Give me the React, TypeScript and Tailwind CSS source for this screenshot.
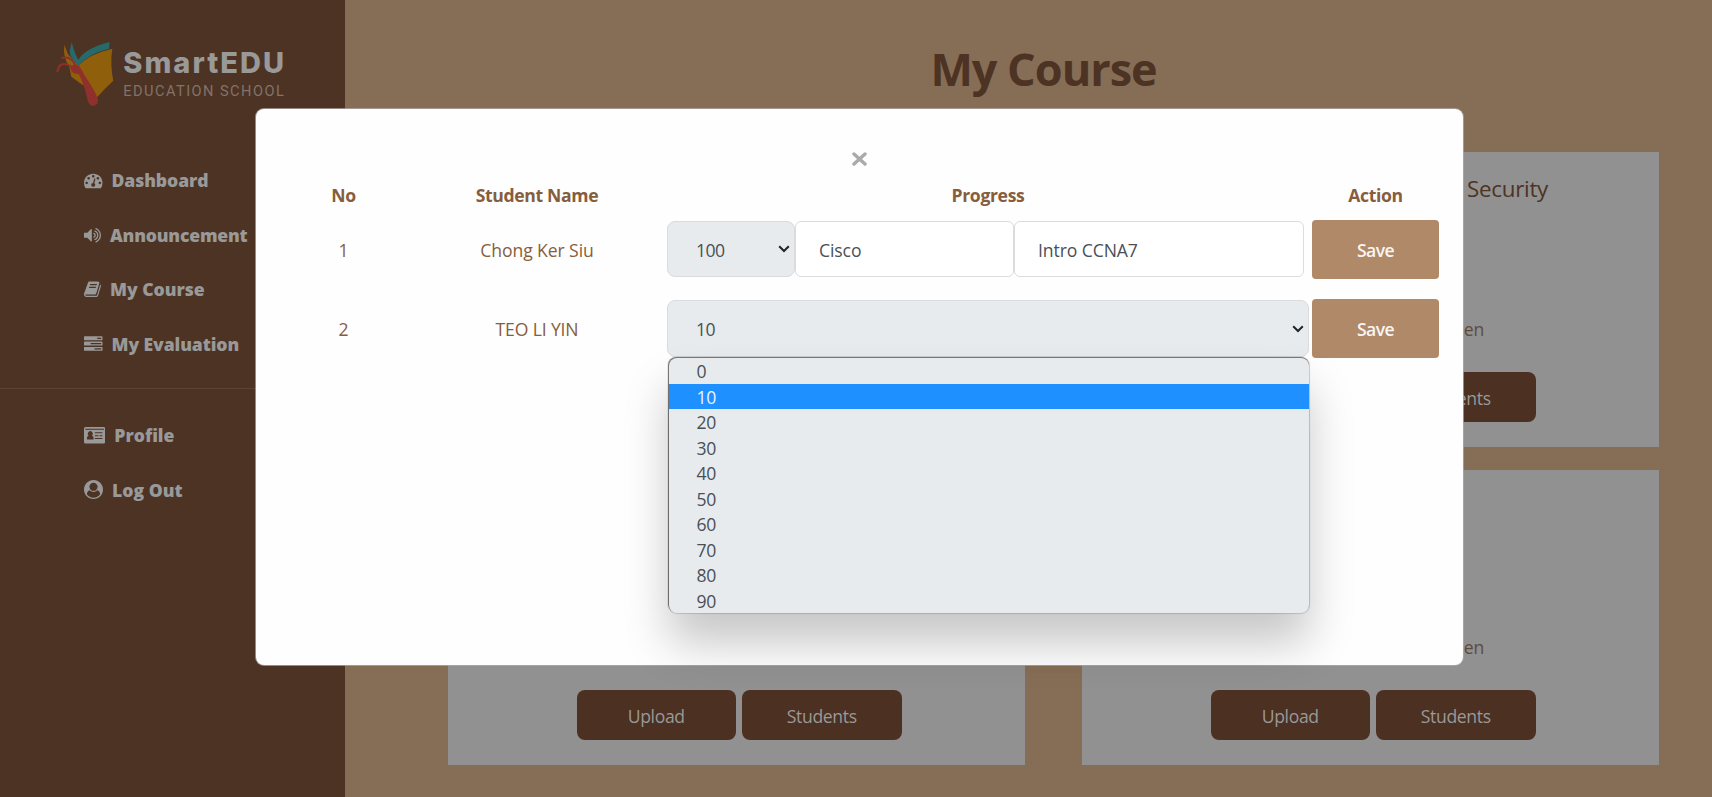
import React from "react";

const ICONS = {
  dashboard: {
    box: "0 0 1792 1792",
    cls: "h-[18.5px] w-[18.5px]",
    d: "M384 1152q0-53-37.5-90.5t-90.5-37.5-90.5 37.5-37.5 90.5 37.5 90.5 90.5 37.5 90.5-37.5 37.5-90.5zm192-448q0-53-37.5-90.5t-90.5-37.5-90.5 37.5-37.5 90.5 37.5 90.5 90.5 37.5 90.5-37.5 37.5-90.5zm428 481l101-382q6-26-7.5-48.5t-38.5-29.5-48 6.5-30 39.5l-101 382q-60 5-107 43.5t-63 98.5q-20 77 20 146t117 89 146-20 89-117q16-60-6-117t-72-91zm660-33q0-53-37.5-90.5t-90.5-37.5-90.5 37.5-37.5 90.5 37.5 90.5 90.5 37.5 90.5-37.5 37.5-90.5zm-640-640q0-53-37.5-90.5t-90.5-37.5-90.5 37.5-37.5 90.5 37.5 90.5 90.5 37.5 90.5-37.5 37.5-90.5zm448 192q0-53-37.5-90.5t-90.5-37.5-90.5 37.5-37.5 90.5 37.5 90.5 90.5 37.5 90.5-37.5 37.5-90.5zm320 448q0 261-141 483-19 29-54 29h-1402q-35 0-54-29-141-221-141-483 0-182 71-348t191-286 286-191 348-71 348 71 286 191 191 286 71 348z",
  },
  volume: {
    box: "64 0 1664 1792",
    cls: "h-[18.5px] w-[17px]",
    d: "M832 352v1088q0 26-19 45t-45 19-45-19l-333-333h-262q-26 0-45-19t-19-45v-384q0-26 19-45t45-19h262l333-333q19-19 45-19t45 19 19 45zm384 544q0 76-42.5 141.5t-112.5 93.5q-10 5-25 5-26 0-45-18.5t-19-45.5q0-21 12-35.5t29-25 34-23 29-36 12-56.5-12-56.5-29-36-34-23-29-25-12-35.5q0-27 19-45.5t45-18.5q15 0 25 5 70 27 112.5 93t42.5 142zm256 0q0 153-85 282.5t-225 188.5q-13 5-25 5-27 0-46-19t-19-45q0-39 39-59 56-29 76-44 74-54 115.5-135.5t41.5-173.5-41.5-173.5-115.5-135.5q-20-15-76-44-39-20-39-59 0-26 19-45t45-19q13 0 26 5 140 59 225 188.5t85 282.5zm256 0q0 230-127 422.5t-338 283.5q-13 5-26 5-26 0-45-19t-19-45q0-36 39-59 7-4 22.5-10.5t22.5-10.5q46-25 82-51 123-91 192-227t69-289-69-289-192-227q-36-26-82-51-7-4-22.5-10.5t-22.5-10.5q-39-23-39-59 0-26 19-45t45-19q13 0 26 5 211 91 338 283.5t127 422.5z",
  },
  book: {
    box: "64 0 1664 1792",
    cls: "h-[18.5px] w-[17px]",
    d: "M1703 478q40 57 18 129l-275 906q-19 64-76.5 107.5t-122.5 43.5h-923q-77 0-148.5-53.5t-99.5-131.5q-24-67-2-127 0-4 3-27t4-37q1-8-3-21.5t-3-19.5q2-11 8-21t16.5-23.5 16.5-23.5q23-38 45-91.5t30-91.5q3-10 .5-30t-.5-28q3-11 17-28t17-23q21-36 42-92t25-90q1-9-2.5-32t.5-28q4-13 22-30.5t22-22.5q19-26 42.5-84.5t27.5-96.5q1-8-3-25.5t-2-26.5q2-8 9-18t18-23 17-21q8-12 16.5-30.5t15-35 16-36 19.5-32 26.5-23.5 36-11.5 47.5 5.5l-1 3q38-9 51-9h761q74 0 114 56t18 130l-274 906q-36 119-71.5 153.5t-128.5 34.5h-869q-27 0-38 15-11 16-1 43 24 70 144 70h923q29 0 56-15.5t35-41.5l300-987q7-22 5-57 38 15 59 43zm-1064 2q-4 13 2 22.5t20 9.5h608q13 0 25.5-9.5t16.5-22.5l21-64q4-13-2-22.5t-20-9.5h-608q-13 0-25.5 9.5t-16.5 22.5zm-83 256q-4 13 2 22.5t20 9.5h608q13 0 25.5-9.5t16.5-22.5l21-64q4-13-2-22.5t-20-9.5h-608q-13 0-25.5 9.5t-16.5 22.5z",
  },
  tasks: {
    box: "0 0 1792 1792",
    cls: "h-[18.5px] w-[18.5px]",
    d: "M1024 1408h640v-128h-640v128zm-384-512h1024v-128h-1024v128zm640-512h384v-128h-384v128zm512 832v256q0 26-19 45t-45 19h-1664q-26 0-45-19t-19-45v-256q0-26 19-45t45-19h1664q26 0 45 19t19 45zm0-512v256q0 26-19 45t-45 19h-1664q-26 0-45-19t-19-45v-256q0-26 19-45t45-19h1664q26 0 45 19t19 45zm0-512v256q0 26-19 45t-45 19h-1664q-26 0-45-19t-19-45v-256q0-26 19-45t45-19h1664q26 0 45 19t19 45z",
  },
  card: {
    box: "0 0 22 17",
    cls: "h-[16.5px] w-[21.3px]",
    d: "M1.6 0H20.4A1.6 1.6 0 0 1 22 1.6V15.4A1.6 1.6 0 0 1 20.4 17H1.6A1.6 1.6 0 0 1 0 15.4V1.6A1.6 1.6 0 0 1 1.6 0ZM1.4 1.8V2.7H20.6V1.8ZM3.6 13H9.4Q10 13 10 12.2Q10 9.2 8.2 9A2.5 2.7 0 1 0 4.8 9Q3 9.2 3 12.2Q3 13 3.6 13ZM11.2 5.4V6.5H19V5.4ZM11.2 8.4V9.5H15V8.4ZM16 8.4V9.5H19V8.4ZM11.2 11.4V12.5H19V11.4Z",
  },
  user: {
    box: "0 0 1792 1792",
    cls: "h-[19px] w-[19px]",
    d: "M1523 1339q-22-155-87.5-257.5t-184.5-118.5q-67 74-159.5 115.5t-195.5 41.5-195.5-41.5-159.5-115.5q-119 16-184.5 118.5t-87.5 257.5q106 150 271 237.5t356 87.5 356-87.5 271-237.5zm-243-699q0-159-112.5-271.5t-271.5-112.5-271.5 112.5-112.5 271.5 112.5 271.5 271.5 112.5 271.5-112.5 112.5-271.5zm512 256q0 182-71 347.5t-190.5 286-285.5 191.5-349 71-348-71-286-191-191-286-71-348 71-348 191-286 286-191 348-71 348 71 286 191 191 286 71 348z",
  },
};

function NavItem({ icon, label, track }: { icon: keyof typeof ICONS; label: string; track: string }) {
  const i = ICONS[icon];
  return (
    <a className="flex h-[54.5px] items-center gap-[9px] pl-[84px] text-[17.6px] font-extrabold">
      <svg viewBox={i.box} className={`${i.cls} shrink-0 fill-current`} fillRule="evenodd">
        <path d={i.d} />
      </svg>
      <span className={`whitespace-nowrap ${track}`}>{label}</span>
    </a>
  );
}

function Logo() {
  return (
    <div className="flex pl-[56px] pt-[41px]">
      <svg viewBox="50 35 175 200" className="h-[66.7px] w-[58.3px] shrink-0">
        <path d="M75 47Q80 58 86 75L118 108Q150 74 219 58Q212 105 222 154Q196 178 172 205Q150 176 126 164L96 142L90 112Q70 84 75 47Z" fill="#8f5f0c" />
        <path d="M97 38Q105 70 117 92Q135 58 211 38L209 58Q150 72 118 108Q92 88 91 64Z" fill="#276a6c" />
        <path d="M93 116Q104 98 120 110Q132 132 150 160Q172 194 176 210Q178 228 161 230Q148 228 144 210Q136 168 118 134Q98 136 93 116Z" fill="#8f302c" />
        <path d="M110 112Q98 78 66 86M100 114Q60 88 54 128" fill="none" stroke="#8f302c" strokeWidth="6" />
      </svg>
      <div className="flex flex-col pl-[9px]">
        <span className="mt-[4px] text-[29px] leading-[36px] font-extrabold tracking-[2px] text-[#999999] font-['Inter',sans-serif]">SmartEDU</span>
        <span className="text-[14.6px] leading-[20px] tracking-[1.45px] whitespace-nowrap text-[#81726a] font-['Roboto',sans-serif]">EDUCATION SCHOOL</span>
      </div>
    </div>
  );
}

function CourseCard({ title = "", by = "", actions = [] }: { title?: string; by?: string; actions?: string[] }) {
  return (
    <section className="flex h-[295px] w-[577px] flex-col items-center bg-[#919191] pl-[5px] text-[#4d3323]">
      <h2 className="h-[52px] w-[350px] pt-[22px] text-right text-[22.4px] leading-[30px] font-medium tracking-[-0.3px]">{title}</h2>
      <p className="mt-[113px] h-[25px] w-[222px] text-right text-[17.6px] leading-[25px] tracking-[-0.2px] text-[#5f4a3d]">{by}</p>
      <div className="mt-[30px] flex gap-[6px] text-[17.6px] tracking-[-0.35px] text-[#999999]">
        {actions.map((a) => (
          <button key={a} className="h-[50px] w-[159.5px] rounded-lg bg-[#4c3021] pt-[2px]">{a}</button>
        ))}
      </div>
    </section>
  );
}

function Caret() {
  return (
    <svg viewBox="0 0 12 8" className="mb-[2px] h-[8px] w-[12px]" fill="none" stroke="#212529" strokeWidth="2">
      <path d="M1.2 1.2L6 6L10.8 1.2" />
    </svg>
  );
}

function SaveButton() {
  return (
    <button className="h-[59px] w-[127px] rounded-[4px] bg-[#b08968] pt-px font-semibold tracking-[-0.6px] text-[#f8f5f2]">Save</button>
  );
}

const OPTIONS = ["0", "10", "20", "30", "40", "50", "60", "70", "80", "90"];

function StudentsModal() {
  return (
    <div className="absolute top-[109px] left-[256px] flex h-[556px] w-[1206.5px] flex-col rounded-lg bg-[#fefefe] text-[17.6px] text-[#865d3d] shadow-[0_0_0_1px_rgba(175,170,165,0.75)]">
      <div className="flex h-[74px] items-end justify-center pb-[17px]">
        <svg viewBox="0 0 15 14" className="ml-px h-[14px] w-[15px]" stroke="#aaaaaa" strokeWidth="3.4" strokeLinecap="round">
          <path d="M2 2L13 12M13 2L2 12" />
        </svg>
      </div>
      <div className="-mt-px grid grid-cols-[175px_212px_690px_85px] text-center leading-[26px] font-bold tracking-[-0.35px]">
        <span>No</span>
        <span>Student Name</span>
        <span>Progress</span>
        <span>Action</span>
      </div>
      <div className="mt-[12px] flex h-[59px] items-center">
        <span className="w-[175px] pt-px text-center">1</span>
        <span className="w-[212px] pt-px text-center tracking-[-0.1px]">Chong Ker Siu</span>
        <div className="-mt-px ml-[24px] flex h-[56px] w-[645px] text-[#495057]">
          <div className="flex w-[128px] items-center justify-between rounded-lg border border-[#d9dbdd] bg-[#e7ebee] pt-[2px] pr-[4px] pl-[28px]">
            <span className="tracking-[-0.5px]">100</span>
            <Caret />
          </div>
          <div className="flex w-[219px] items-center rounded-md border border-[#dcdcdc] bg-white pt-[2px] pl-[23px] tracking-[-0.1px]">Cisco</div>
          <div className="flex w-[290px] items-center rounded-md border border-[#dcdcdc] bg-white pt-[2px] pl-[23px] tracking-[-0.1px]">Intro CCNA7</div>
        </div>
        <SaveButton />
      </div>
      <div className="mt-[20px] flex h-[59px] items-center">
        <span className="w-[175px] pt-[2px] text-center">2</span>
        <span className="w-[212px] pt-[2px] text-center tracking-[-0.15px]">TEO LI YIN</span>
        <div className="relative ml-[24px] w-[645px] text-[#495057]">
          <div className="flex h-[57px] w-[642px] items-center justify-between rounded-lg border border-[#d9dbdd] bg-[#e7ebee] pt-[2px] pr-[4px] pl-[28px]">
            <span className="tracking-[-0.5px]">10</span>
            <Caret />
          </div>
          <ul className="absolute top-[58px] left-[1.5px] w-[640.5px] overflow-hidden rounded-lg bg-[#e7ebee] tracking-[-0.4px] shadow-[0_0_1px_1px_rgba(0,0,0,0.15),-0.5px_-1px_1px_0_rgba(0,0,0,0.5),0_30px_45px_0_rgba(0,0,0,0.22)]">
            {OPTIONS.map((o) => (
              <li key={o} className={o === "10" ? "h-[25.5px] bg-[#1e90ff] pl-[28px] leading-[27px] text-[#eaf4ff]" : "h-[25.5px] pl-[28px] leading-[27px]"}>
                {o}
              </li>
            ))}
          </ul>
        </div>
        <SaveButton />
      </div>
    </div>
  );
}

export default function App() {
  return (
    <div className="relative flex h-[797px] w-[1712px] overflow-hidden bg-[#866d56] font-['Open_Sans','Noto_Sans',sans-serif]">
      <aside className="flex w-[345px] shrink-0 flex-col bg-[#4d3323] text-[#999999]">
        <Logo />
        <nav className="mt-[45.5px] flex flex-col">
          <NavItem icon="dashboard" label="Dashboard" track="tracking-[-0.1px]" />
          <NavItem icon="volume" label="Announcement" track="tracking-[-0.2px]" />
          <NavItem icon="book" label="My Course" track="tracking-[-0.05px]" />
          <NavItem icon="tasks" label="My Evaluation" track="tracking-[-0.1px]" />
        </nav>
        <hr className="mt-[17px] border-[#5c4136]" />
        <nav className="mt-[19px] flex flex-col">
          <NavItem icon="card" label="Profile" track="tracking-[0px]" />
          <NavItem icon="user" label="Log Out" track="tracking-[0px]" />
        </nav>
      </aside>
      <main className="flex flex-1 flex-col pl-[103px]">
        <h1 className="mr-[73px] flex h-[152px] items-start justify-center pt-[38px] text-[45px] leading-[62px] font-bold tracking-[-1px] text-[#4d3323]">My Course</h1>
        <div className="grid grid-cols-[577px_577px] gap-x-[57px] gap-y-[23px]">
          <CourseCard />
          <CourseCard title="Security" by="sen" actions={["", "Students"]} />
          <CourseCard actions={["Upload", "Students"]} />
          <CourseCard by="sen" actions={["Upload", "Students"]} />
        </div>
      </main>
      <StudentsModal />
    </div>
  );
}
